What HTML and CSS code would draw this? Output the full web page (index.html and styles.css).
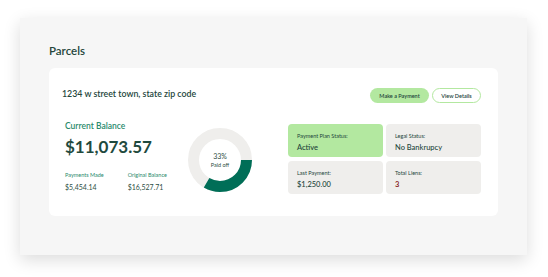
FILE: index.html
```html
<!DOCTYPE html>
<html lang="en">
<head>
    <meta charset="UTF-8">
    <meta name="viewport" content="width=device-width, initial-scale=1.0">
    <title>Parcels</title>
    <link rel="stylesheet" href="styles.css">
</head>
<body>
    <main class="panel">
        <h1 class="panel-title">Parcels</h1>

        <section class="parcel">
            <header class="parcel-head">
                <h2 class="address">1234 w street town, state zip code</h2>
                <div class="actions">
                    <button class="btn btn-fill">Make a Payment</button>
                    <button class="btn btn-line">View Details</button>
                </div>
            </header>

            <div class="parcel-body">
                <div class="balance">
                    <div class="balance-label">Current Balance</div>
                    <div class="balance-amount">$11,073.57</div>
                    <div class="balance-sub">
                        <div>
                            <div class="sub-label">Payments Made</div>
                            <div class="sub-value">$5,454.14</div>
                        </div>
                        <div>
                            <div class="sub-label">Original Balance</div>
                            <div class="sub-value">$16,527.71</div>
                        </div>
                    </div>
                </div>

                <div class="donut">
                    <svg viewBox="0 0 64 64" width="64" height="64">
                        <circle cx="32" cy="32" r="26.5" fill="none" stroke="#efeeec" stroke-width="11"/>
                        <!-- 33% arc, starting at 3 o'clock going clockwise -->
                        <circle cx="32" cy="32" r="26.5" fill="none" stroke="#006e57" stroke-width="11"
                                stroke-dasharray="55.4 200"/>
                    </svg>
                    <div class="donut-text">
                        <span class="donut-pct">33%</span>
                        <span class="donut-sub">Paid off</span>
                    </div>
                </div>

                <div class="stats">
                    <div class="stat stat-active">
                        <div class="stat-label">Payment Plan Status:</div>
                        <div class="stat-value">Active</div>
                    </div>
                    <div class="stat">
                        <div class="stat-label">Legal Status:</div>
                        <div class="stat-value">No Bankrupcy</div>
                    </div>
                    <div class="stat">
                        <div class="stat-label">Last Payment:</div>
                        <div class="stat-value">$1,250.00</div>
                    </div>
                    <div class="stat">
                        <div class="stat-label">Total Liens:</div>
                        <div class="stat-value stat-alert">3</div>
                    </div>
                </div>
            </div>
        </section>
    </main>
</body>
</html>
```

FILE: styles.css
```css
* {
    margin: 0;
    padding: 0;
    box-sizing: border-box;
}

body {
    font-family: Lato, "Open Sans", sans-serif;
    background: #ffffff;
    color: #1f3d35;
    padding: 18px 21px 22px 20px;
}

.panel {
    width: 507px;
    height: 237px;
    background: #f6f6f6;
    box-shadow: 0 5px 16px rgba(0, 0, 0, 0.14);
    padding: 25px 29px;
}

.panel-title {
    font-size: 11.5px;
    font-weight: 600;
    color: #24463c;
    line-height: 16px;
    margin-bottom: 9px;
}

.parcel {
    background: #ffffff;
    border-radius: 6px;
    padding: 20px 17px 22px 13px;
}

.parcel-head {
    display: flex;
    align-items: center;
    justify-content: space-between;
    height: 15px;
    margin-bottom: 21px;
}

.address {
    font-size: 8.8px;
    font-weight: 600;
    color: #24463c;
    margin-bottom: 5px;
}

.actions {
    display: flex;
    gap: 3px;
}

.btn {
    font-family: inherit;
    font-size: 5.5px;
    font-weight: 600;
    color: #24463c;
    height: 15px;
    border-radius: 8px;
    cursor: pointer;
}

.btn-fill {
    width: 59px;
    background: #b3e8a0;
    border: none;
}

.btn-line {
    width: 49px;
    background: #ffffff;
    border: 1.5px solid #b3e8a0;
}

.parcel-body {
    display: flex;
    align-items: flex-start;
}

.balance {
    width: 123px;
    margin: -3px 0 0 3px;
}

.balance-label {
    font-size: 8.5px;
    font-weight: 600;
    color: #2a8a6c;
    line-height: 10px;
}

.balance-amount {
    font-size: 17px;
    font-weight: 700;
    color: #1f4a3e;
    line-height: 22px;
    margin-top: 5px;
}

.balance-sub {
    display: flex;
    gap: 24px;
    margin-top: 13px;
}

.sub-label {
    font-size: 5.5px;
    color: #2a8a6c;
    line-height: 8px;
}

.sub-value {
    font-size: 7px;
    color: #2e4f45;
    line-height: 10px;
    margin-top: 3px;
}

.donut {
    position: relative;
    width: 64px;
    height: 64px;
    margin-top: 4px;
}

.donut svg {
    display: block;
}

.donut-text {
    position: absolute;
    inset: 0;
    display: flex;
    flex-direction: column;
    align-items: center;
    justify-content: center;
    color: #2e4f45;
}

.donut-pct {
    font-size: 7px;
    line-height: 9px;
}

.donut-sub {
    font-size: 5.5px;
    line-height: 8px;
}

.stats {
    margin-left: auto;
    display: grid;
    grid-template-columns: 95px 95px;
    gap: 4px 3px;
}

.stat {
    height: 33px;
    background: #efeeec;
    border-radius: 4px;
    padding: 8px 9px;
}

.stat-active {
    background: #b3e8a0;
}

.stat-label {
    font-size: 5.5px;
    color: #24463c;
    line-height: 8px;
}

.stat-value {
    font-size: 7.5px;
    font-weight: 500;
    color: #24463c;
    margin-top: 3px;
}

.stat-alert {
    color: #8b2a2a;
    font-weight: 700;
}
```
